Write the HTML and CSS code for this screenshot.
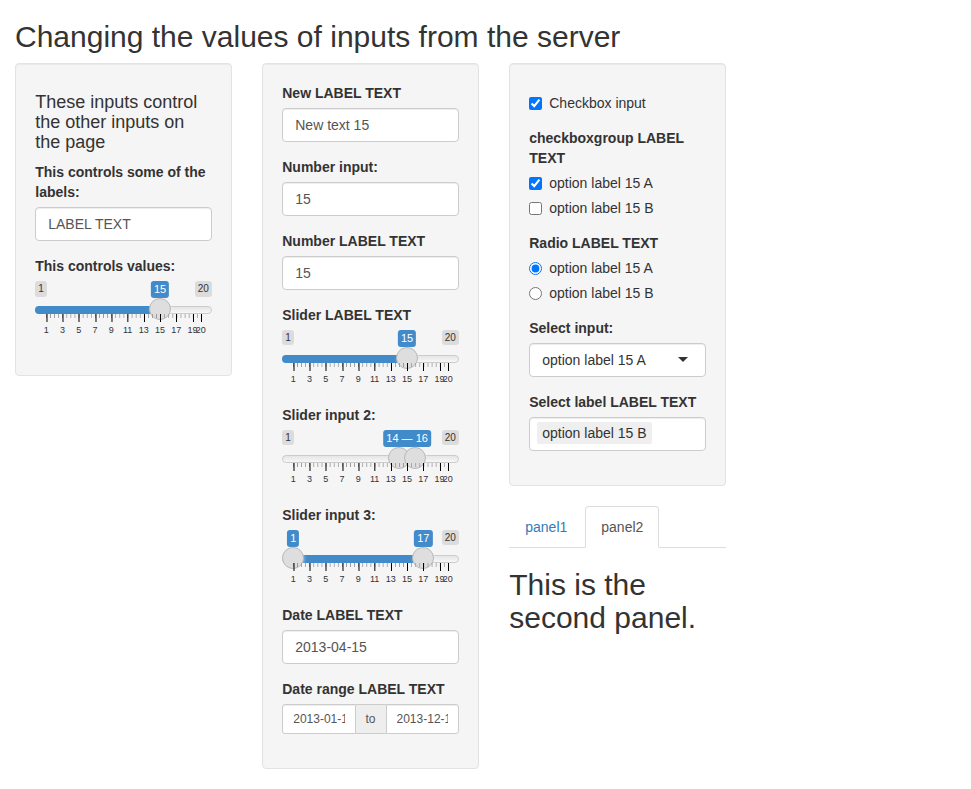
FILE: index.html
```html
<!DOCTYPE html>
<html lang="en">
<head>
<meta charset="utf-8">
<title>Changing the values of inputs from the server</title>
<link rel="stylesheet" href="styles.css">
</head>
<body>
<div class="container-fluid">
  <h2 class="page-title">Changing the values of inputs from the server</h2>
  <div class="row">
    <div class="col">
      <div class="well">
        <h4 class="intro">These inputs control the other inputs on the page</h4>
        <div class="form-group">
          <label class="control-label" for="control_label">This controls some of the labels:</label>
          <input id="control_label" type="text" class="form-control" value="LABEL TEXT">
        </div>
        <div class="form-group">
          <label class="control-label">This controls values:</label>
          <div class="irs" style="--f:0.736842">
            <span class="irs-line"></span>
            <span class="irs-bar irs-bar-single"></span>
            <span class="irs-min">1</span>
            <span class="irs-max">20</span>
            <span class="irs-label irs-single">15</span>
            <span class="irs-slider"></span>
            <span class="irs-grid"><span class="gt">1</span><span class="gt">3</span><span class="gt">5</span><span class="gt">7</span><span class="gt">9</span><span class="gt">11</span><span class="gt">13</span><span class="gt">15</span><span class="gt">17</span><span class="gt">19</span><span class="gt">20</span></span>
          </div>
        </div>
      </div>
    </div>

    <div class="col">
      <div class="well">
        <div class="form-group">
          <label class="control-label" for="inText">New LABEL TEXT</label>
          <input id="inText" type="text" class="form-control" value="New text 15">
        </div>
        <div class="form-group">
          <label class="control-label" for="inNumber">Number input:</label>
          <input id="inNumber" type="number" class="form-control" value="15">
        </div>
        <div class="form-group">
          <label class="control-label" for="inNumber2">Number LABEL TEXT</label>
          <input id="inNumber2" type="number" class="form-control" value="15">
        </div>
        <div class="form-group">
          <label class="control-label">Slider LABEL TEXT</label>
          <div class="irs" style="--f:0.736842">
            <span class="irs-line"></span>
            <span class="irs-bar irs-bar-single"></span>
            <span class="irs-min">1</span>
            <span class="irs-max">20</span>
            <span class="irs-label irs-single">15</span>
            <span class="irs-slider"></span>
            <span class="irs-grid"><span class="gt">1</span><span class="gt">3</span><span class="gt">5</span><span class="gt">7</span><span class="gt">9</span><span class="gt">11</span><span class="gt">13</span><span class="gt">15</span><span class="gt">17</span><span class="gt">19</span><span class="gt">20</span></span>
          </div>
        </div>
        <div class="form-group">
          <label class="control-label">Slider input 2:</label>
          <div class="irs" style="--a:0.684211; --b:0.789474; --f:0.736842">
            <span class="irs-line"></span>
            <span class="irs-bar irs-bar-range"></span>
            <span class="irs-min">1</span>
            <span class="irs-max">20</span>
            <span class="irs-label irs-single">14 — 16</span>
            <span class="irs-slider from"></span>
            <span class="irs-slider to"></span>
            <span class="irs-grid"><span class="gt">1</span><span class="gt">3</span><span class="gt">5</span><span class="gt">7</span><span class="gt">9</span><span class="gt">11</span><span class="gt">13</span><span class="gt">15</span><span class="gt">17</span><span class="gt">19</span><span class="gt">20</span></span>
          </div>
        </div>
        <div class="form-group">
          <label class="control-label">Slider input 3:</label>
          <div class="irs" style="--a:0; --b:0.842105">
            <span class="irs-line"></span>
            <span class="irs-bar irs-bar-range"></span>
            <span class="irs-max">20</span>
            <span class="irs-label irs-from">1</span>
            <span class="irs-label irs-to">17</span>
            <span class="irs-slider from"></span>
            <span class="irs-slider to"></span>
            <span class="irs-grid"><span class="gt">1</span><span class="gt">3</span><span class="gt">5</span><span class="gt">7</span><span class="gt">9</span><span class="gt">11</span><span class="gt">13</span><span class="gt">15</span><span class="gt">17</span><span class="gt">19</span><span class="gt">20</span></span>
          </div>
        </div>
        <div class="form-group">
          <label class="control-label" for="inDate">Date LABEL TEXT</label>
          <input id="inDate" type="text" class="form-control" value="2013-04-15">
        </div>
        <div class="form-group">
          <label class="control-label">Date range LABEL TEXT</label>
          <div class="input-daterange">
            <input type="text" class="input-sm date-start" value="2013-01-15">
            <span class="input-group-addon">to</span>
            <input type="text" class="input-sm date-end" value="2013-12-15">
          </div>
        </div>
      </div>
    </div>

    <div class="col">
      <div class="well">
        <div class="form-group">
          <div class="checkbox">
            <label><input type="checkbox" checked><span>Checkbox input</span></label>
          </div>
        </div>
        <div class="form-group">
          <label class="control-label">checkboxgroup LABEL TEXT</label>
          <div class="shiny-options-group">
            <div class="checkbox"><label><input type="checkbox" checked><span>option label 15 A</span></label></div>
            <div class="checkbox"><label><input type="checkbox"><span>option label 15 B</span></label></div>
          </div>
        </div>
        <div class="form-group">
          <label class="control-label">Radio LABEL TEXT</label>
          <div class="shiny-options-group">
            <div class="radio"><label><input type="radio" name="inRadio" checked><span>option label 15 A</span></label></div>
            <div class="radio"><label><input type="radio" name="inRadio"><span>option label 15 B</span></label></div>
          </div>
        </div>
        <div class="form-group">
          <label class="control-label">Select input:</label>
          <div class="selectize-control single">
            <div class="selectize-input"><div class="item">option label 15 A</div></div>
          </div>
        </div>
        <div class="form-group">
          <label class="control-label">Select label LABEL TEXT</label>
          <div class="selectize-control multi">
            <div class="selectize-input"><div class="item">option label 15 B</div></div>
          </div>
        </div>
      </div>

      <div class="tabbable">
        <ul class="nav-tabs">
          <li><a href="#tab-1">panel1</a></li>
          <li class="active"><a href="#tab-2">panel2</a></li>
        </ul>
        <div class="tab-content">
          <h2 class="panel-heading">This is the second panel.</h2>
        </div>
      </div>
    </div>
  </div>
</div>
</body>
</html>
```

FILE: styles.css
```css
* {
  box-sizing: border-box;
}

html, body {
  margin: 0;
  padding: 0;
  background: #fff;
}

body {
  font-family: "Liberation Sans", Arial, Helvetica, sans-serif;
  font-size: 14px;
  line-height: 1.42857143;
  color: #333;
}

.container-fluid {
  padding: 0;
}

.page-title {
  margin: 20px 0 10px;
  padding-left: 15px;
  font-size: 30px;
  font-weight: 500;
  line-height: 1.1;
}

.row {
  display: flex;
  align-items: flex-start;
}

.col {
  width: 247px;
  flex: none;
  padding: 0 15.25px;
}

.well {
  min-height: 20px;
  padding: 19px;
  margin-bottom: 20px;
  background-color: #f5f5f5;
  border: 1px solid #e3e3e3;
  border-radius: 4px;
  box-shadow: inset 0 1px 1px rgba(0, 0, 0, 0.05);
}

.intro {
  margin: 10px 0 10px;
  font-size: 18px;
  font-weight: 500;
  line-height: 1.1;
}

.form-group {
  margin-bottom: 15px;
}

.control-label {
  display: inline-block;
  max-width: 100%;
  margin-bottom: 5px;
  font-weight: bold;
}

.form-control {
  display: block;
  width: 100%;
  height: 34px;
  padding: 6px 12px;
  font-family: inherit;
  font-size: 14px;
  line-height: 1.42857143;
  color: #555;
  background-color: #fff;
  border: 1px solid #ccc;
  border-radius: 4px;
  box-shadow: inset 0 1px 1px rgba(0, 0, 0, 0.075);
  margin: 0;
  outline: none;
}

input[type="number"]::-webkit-inner-spin-button,
input[type="number"]::-webkit-outer-spin-button {
  -webkit-appearance: none;
  margin: 0;
}

/* ---------- slider (ion.rangeSlider, shiny skin) ---------- */
.irs {
  position: relative;
  display: block;
  height: 60px;
  font-family: "Liberation Sans", Arial, sans-serif;
}

.irs-line {
  position: absolute;
  left: 0;
  right: 0;
  top: 25px;
  height: 8px;
  border: 1px solid #ccc;
  border-radius: 16px;
  background: linear-gradient(to bottom, #ddd -50%, #fff 150%);
}

.irs-bar {
  position: absolute;
  top: 25px;
  height: 8px;
  background: #428bca;
}

.irs-bar-single {
  left: 0;
  width: calc(11px + (100% - 22px) * var(--f));
  border-radius: 16px 0 0 16px;
}

.irs-bar-range {
  left: calc(11px + (100% - 22px) * var(--a));
  width: calc((100% - 22px) * (var(--b) - var(--a)));
}

.irs-slider {
  position: absolute;
  top: 17px;
  left: calc((100% - 22px) * var(--f));
  width: 22px;
  height: 22px;
  border: 1px solid #b8b8b8;
  border-radius: 50%;
  background: #dedede;
  box-shadow: 1px 1px 3px rgba(255, 255, 255, 0.3);
}

.irs-slider.from {
  left: calc((100% - 22px) * var(--a));
}

.irs-slider.to {
  left: calc((100% - 22px) * var(--b));
}

.irs-min,
.irs-max {
  position: absolute;
  top: 0;
  padding: 1px 3px;
  font-size: 10px;
  line-height: 1.333;
  color: #333;
  background: rgba(0, 0, 0, 0.1);
  border-radius: 3px;
}

.irs-min {
  left: 0;
}

.irs-max {
  right: 0;
}

.irs-label {
  position: absolute;
  top: 0;
  left: calc(11px + (100% - 22px) * var(--f));
  transform: translateX(-50%);
  padding: 1px 3px;
  font-size: 11px;
  line-height: 1.333;
  color: #fff;
  white-space: nowrap;
  background: #428bca;
  border-radius: 3px;
}

.irs-label.irs-from {
  left: calc(11px + (100% - 22px) * var(--a));
}

.irs-label.irs-to {
  left: calc(11px + (100% - 22px) * var(--b));
}

.irs-grid {
  position: absolute;
  left: 11px;
  right: 11px;
  top: 33px;
  height: 27px;
  background: linear-gradient(to right, #999 1px, transparent 1px) 0 0 / calc(100% / 38) 4px repeat-x;
}

.gt {
  position: absolute;
  top: 0;
  transform: translateX(-50%);
  padding-top: 12px;
  font-size: 9px;
  line-height: 9px;
  color: #333;
  white-space: nowrap;
}

.gt::before {
  content: "";
  position: absolute;
  top: 0;
  left: 50%;
  width: 1px;
  height: 8px;
  background: #000;
}

.gt:nth-child(1) { left: 0; }
.gt:nth-child(2) { left: 10.526%; }
.gt:nth-child(3) { left: 21.053%; }
.gt:nth-child(4) { left: 31.579%; }
.gt:nth-child(5) { left: 42.105%; }
.gt:nth-child(6) { left: 52.632%; }
.gt:nth-child(7) { left: 63.158%; }
.gt:nth-child(8) { left: 73.684%; }
.gt:nth-child(9) { left: 84.211%; }
.gt:nth-child(10) { left: 94.737%; }
.gt:nth-child(11) { left: 100%; }

/* ---------- date range ---------- */
.input-daterange {
  display: flex;
  width: 100%;
}

.input-sm {
  flex: 1 1 0;
  min-width: 0;
  height: 30px;
  padding: 5px 10px;
  margin: 0;
  font-family: inherit;
  font-size: 12px;
  line-height: 1.5;
  color: #555;
  background: #fff;
  border: 1px solid #ccc;
  box-shadow: inset 0 1px 1px rgba(0, 0, 0, 0.075);
  outline: none;
}

.date-start {
  border-radius: 3px 0 0 3px;
}

.date-end {
  border-radius: 0 3px 3px 0;
}

.input-group-addon {
  flex: none;
  padding: 5px 10px;
  font-size: 12px;
  line-height: 18px;
  color: #555;
  background: #eee;
  border-top: 1px solid #ccc;
  border-bottom: 1px solid #ccc;
  text-align: center;
}

/* ---------- checkboxes & radios ---------- */
.checkbox,
.radio {
  position: relative;
  display: block;
  margin-top: 10px;
  margin-bottom: 10px;
}

.checkbox + .checkbox,
.radio + .radio {
  margin-top: -5px;
}

.checkbox label,
.radio label {
  display: inline-block;
  min-height: 20px;
  padding-left: 20px;
  margin-bottom: 0;
  font-weight: normal;
}

.checkbox input,
.radio input {
  position: absolute;
  margin: 4px 0 0 -20px;
  width: 13px;
  height: 13px;
}

.control-label ~ .shiny-options-group {
  margin-top: -10px;
}

/* ---------- selectize ---------- */
.selectize-control {
  position: relative;
}

.selectize-input {
  position: relative;
  display: block;
  width: 100%;
  min-height: 34px;
  padding: 6px 12px;
  color: #333;
  background: #fff;
  border: 1px solid #ccc;
  border-radius: 4px;
  box-shadow: inset 0 1px 1px rgba(0, 0, 0, 0.075);
}

.single .selectize-input::after {
  content: "";
  position: absolute;
  top: 50%;
  right: 17px;
  margin-top: -3px;
  width: 0;
  height: 0;
  border-style: solid;
  border-width: 5px 5px 0 5px;
  border-color: #333 transparent transparent transparent;
}

.multi .selectize-input {
  padding: 4px 12px 4px 7px;
}

.multi .item {
  display: inline-block;
  padding: 1px 5px;
  line-height: 20px;
  color: #333;
  background: #efefef;
  border-radius: 2px;
}

/* ---------- tabs ---------- */
.nav-tabs {
  display: flex;
  margin: 0;
  padding: 0;
  list-style: none;
  border-bottom: 1px solid #ddd;
}

.nav-tabs li {
  margin-bottom: -1px;
}

.nav-tabs a {
  display: block;
  padding: 10px 15px;
  margin-right: 2px;
  line-height: 1.42857143;
  color: #337ab7;
  text-decoration: none;
  border: 1px solid transparent;
  border-radius: 4px 4px 0 0;
}

.nav-tabs li.active a {
  color: #555;
  background: #fff;
  border-color: #ddd #ddd transparent;
}

.panel-heading {
  margin: 20px 0 10px;
  font-size: 30px;
  font-weight: 500;
  line-height: 1.1;
}
```
